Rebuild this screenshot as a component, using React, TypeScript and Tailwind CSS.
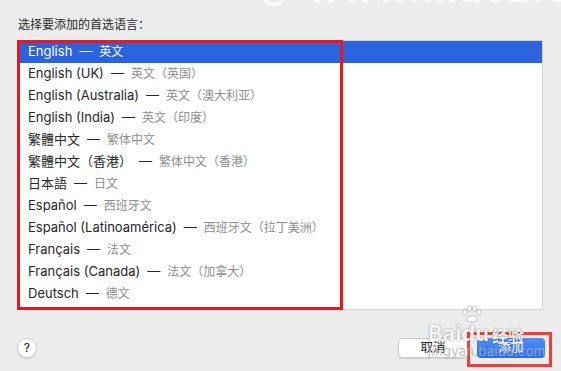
import React from "react";

const rows: [string, string][] = [
  ["English", "英文"],
  ["English (UK)", "英文（英国）"],
  ["English (Australia)", "英文（澳大利亚）"],
  ["English (India)", "英文（印度）"],
  ["繁體中文", "繁体中文"],
  ["繁體中文（香港）", "繁体中文（香港）"],
  ["日本語", "日文"],
  ["Español", "西班牙文"],
  ["Español (Latinoamérica)", "西班牙文（拉丁美洲）"],
  ["Français", "法文"],
  ["Français (Canada)", "法文（加拿大）"],
  ["Deutsch", "德文"],
];

const wmShadow = "0 0 1px rgba(0,0,0,0.45), 0 0 2px rgba(0,0,0,0.2)";

function Paw() {
  return (
    <svg width="22" height="18" viewBox="0 0 22 18">
      <g fill="#ffffff" stroke="#9a9a9a" strokeWidth="0.6" opacity="0.9">
        <ellipse cx="4" cy="7.5" rx="2.2" ry="3" />
        <ellipse cx="8.5" cy="3.5" rx="2.2" ry="3" />
        <ellipse cx="13.5" cy="3.5" rx="2.2" ry="3" />
        <ellipse cx="18" cy="7.5" rx="2.2" ry="3" />
        <path d="M5.5 15 C6 9.5 16 9.5 16.5 15 C16.5 17.5 5.5 17.5 5.5 15 Z" />
      </g>
    </svg>
  );
}

export default function App() {
  return (
    <div
      className="relative w-[561px] h-[371px] overflow-hidden bg-[#ececec] text-[#262626]"
      style={{ fontFamily: 'Inter, "Noto Sans CJK SC", sans-serif' }}
    >
      {/* top watermark */}
      <div className="absolute left-[262px] top-[-18px] w-[24px] h-[24px] rounded-full border-[3px] border-white/80" />
      <div className="absolute left-[308px] top-[-31px] text-[38px] font-bold leading-none tracking-[2px] text-white/80">
        www.macz.com
      </div>

      <div className="flex flex-col h-full">
        <div className="pl-[18px] pt-[16px] h-[40px] text-[12px] leading-[18px] text-[#2a2a2a]">
          选择要添加的首选语言：
        </div>

        <div className="mx-[18px] h-[270px] bg-white border border-[#d3d3d3]">
          {rows.map(([name, zh], i) => {
            const sel = i === 0;
            return (
              <div
                key={i}
                className={
                  "flex items-center h-[22px] pl-[9px] text-[13px] " +
                  (sel ? "bg-[#2b63dc] text-white" : "text-[#262626]")
                }
              >
                <span>{name}</span>
                <span className="mx-[7px]">—</span>
                <span className={sel ? "text-white text-[12px]" : "text-[#8e8e8e] text-[12px]"}>{zh}</span>
              </div>
            );
          })}
        </div>

        <div className="flex items-center justify-between pl-[17px] pr-[16px] mt-[28px]">
          <div className="flex items-center justify-center w-[20px] h-[20px] rounded-full bg-white border border-[#cfcfcf] shadow-[0_1px_1px_rgba(0,0,0,0.12)] text-[12px] font-medium text-[#333]">
            ?
          </div>
          <div className="flex items-center gap-[9px]">
            <div className="flex items-center justify-center w-[70px] h-[20px] rounded-[4px] bg-white border border-[#c9c9c9] shadow-[0_1px_1px_rgba(0,0,0,0.1)] text-[12.5px] text-[#262626]">
              取消
            </div>
            <div className="flex items-center justify-center w-[68px] h-[20px] rounded-[4px] bg-gradient-to-b from-[#4f90f8] to-[#2a6cef] text-[12.5px] text-white">
              添加
            </div>
          </div>
        </div>
      </div>

      {/* red highlight boxes */}
      <div className="absolute left-[17px] top-[40px] w-[326px] h-[270px] border-[3px] border-[#e8161d]" />
      <div className="absolute left-[467px] top-[332px] w-[85px] h-[35px] border-[3px] border-[#ef3f38]" />

      {/* baidu watermark */}
      <div className="absolute left-[428px] top-[312px] flex flex-col items-start pointer-events-none">
        <div className="flex items-end h-[32px]">
          <span className="text-[22px] font-bold leading-none text-white/95" style={{ textShadow: wmShadow }}>
            Bai
          </span>
          <span className="relative flex flex-col items-center">
            <span className="absolute top-[-17px] left-[0px]"><Paw /></span>
            <span className="text-[22px] font-bold leading-none text-white/95" style={{ textShadow: wmShadow }}>
              du
            </span>
          </span>
          <span className="ml-[3px] text-[16px] font-bold leading-none text-white/95" style={{ textShadow: wmShadow }}>
            经验
          </span>
        </div>
        <div className="text-[13px] leading-[14px] text-[#b0b0b0]/80 tracking-[0.3px]">
          jingyan.baidu.com
        </div>
      </div>
    </div>
  );
}
